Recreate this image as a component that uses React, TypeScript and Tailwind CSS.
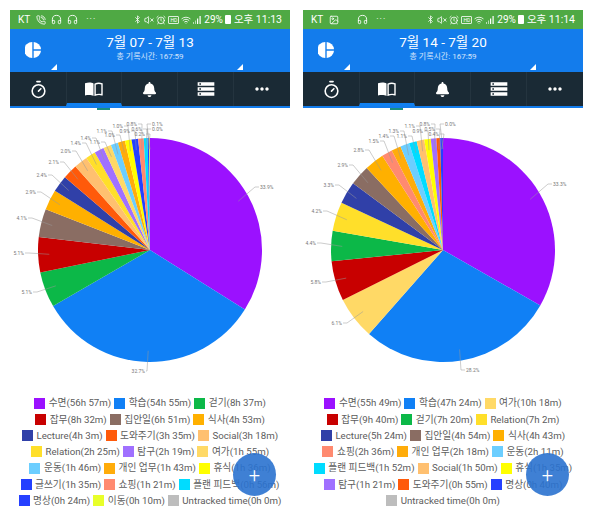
import { AlarmClock, Bluetooth, Headphones, Image, PhoneCall, Timer, VolumeX, Wifi } from "lucide-react";
import { FaBell } from "react-icons/fa";
import { MdMoreHoriz, MdStorage } from "react-icons/md";

const colors: Record<string, { hex: string; bg: string }> = {
    "수면": { hex: "#9b11ff", bg: "bg-[#9b11ff]" },
    "학습": { hex: "#1080f5", bg: "bg-[#1080f5]" },
    "걷기": { hex: "#0cb848", bg: "bg-[#0cb848]" },
    "잡무": { hex: "#c80000", bg: "bg-[#c80000]" },
    "집안일": { hex: "#8a6d63", bg: "bg-[#8a6d63]" },
    "식사": { hex: "#ffb000", bg: "bg-[#ffb000]" },
    "Lecture": { hex: "#3040a8", bg: "bg-[#3040a8]" },
    "도와주기": { hex: "#ff5a0a", bg: "bg-[#ff5a0a]" },
    "Social": { hex: "#ffc070", bg: "bg-[#ffc070]" },
    "Relation": { hex: "#ffdf2a", bg: "bg-[#ffdf2a]" },
    "탐구": { hex: "#a070ff", bg: "bg-[#a070ff]" },
    "여가": { hex: "#ffd966", bg: "bg-[#ffd966]" },
    "운동": { hex: "#6cceff", bg: "bg-[#6cceff]" },
    "개인 업무": { hex: "#ffac0a", bg: "bg-[#ffac0a]" },
    "휴식": { hex: "#ffff00", bg: "bg-[#ffff00]" },
    "글쓰기": { hex: "#2440ff", bg: "bg-[#2440ff]" },
    "쇼핑": { hex: "#ff8a70", bg: "bg-[#ff8a70]" },
    "플랜 피드백": { hex: "#00dcff", bg: "bg-[#00dcff]" },
    "명상": { hex: "#2640ff", bg: "bg-[#2640ff]" },
    "이동": { hex: "#e8ff2a", bg: "bg-[#e8ff2a]" },
    "Untracked time": { hex: "#bdbdbd", bg: "bg-[#bdbdbd]" },
};

// name, minutes, label text, label x, label y (full page coordinates)
type Slice = [string, number, string, number, number];

const week1: Slice[] = [
    ["수면", 3417, "33.9%", 260, 187],
    ["학습", 3295, "32.7%", 145, 371],
    ["걷기", 517, "5.1%", 32, 292],
    ["잡무", 512, "5.1%", 24, 253],
    ["집안일", 411, "4.1%", 27, 218],
    ["식사", 293, "2.9%", 36, 192],
    ["Lecture", 243, "2.4%", 47, 175],
    ["도와주기", 215, "2.1%", 59, 162],
    ["Social", 198, "2.0%", 71, 151],
    ["Relation", 145, "1.4%", 81, 143],
    ["탐구", 139, "1.4%", 91, 138],
    ["여가", 115, "1.1%", 100, 142],
    ["운동", 106, "1.1%", 107, 131],
    ["개인 업무", 103, "1.0%", 115, 135],
    ["휴식", 96, "1.0%", 123, 126],
    ["글쓰기", 95, "0.9%", 130, 131],
    ["쇼핑", 81, "0.8%", 137, 124],
    ["플랜 피드백", 56, "0.6%", 142, 129],
    ["명상", 24, "0.2%", 145, 134],
    ["이동", 10, "0.1%", 152, 124],
    ["Untracked time", 0, "0.0%", 152, 129],
];

const week2: Slice[] = [
    ["수면", 3349, "33.3%", 553, 184],
    ["학습", 2844, "28.2%", 466, 370],
    ["여가", 618, "6.1%", 342, 323],
    ["잡무", 580, "5.8%", 321, 282],
    ["걷기", 440, "4.4%", 316, 243],
    ["Relation", 422, "4.2%", 322, 211],
    ["Lecture", 324, "3.3%", 334, 185],
    ["집안일", 294, "2.9%", 348, 165],
    ["식사", 283, "2.8%", 364, 150],
    ["쇼핑", 156, "1.5%", 379, 141],
    ["개인 업무", 138, "1.4%", 389, 136],
    ["운동", 131, "1.3%", 399, 131],
    ["플랜 피드백", 112, "1.1%", 407, 136],
    ["Social", 110, "1.1%", 415, 126],
    ["휴식", 95, "0.9%", 423, 131],
    ["탐구", 81, "0.8%", 430, 124],
    ["도와주기", 55, "0.5%", 435, 129],
    ["명상", 40, "0.4%", 439, 134],
    ["Untracked time", 0, "0.0%", 445, 124],
];

const point = (cx: number, cy: number, r: number, angle: number) => [
    cx + r * Math.sin(angle),
    cy - r * Math.cos(angle),
];

const duration = (minutes: number) => `${Math.floor(minutes / 60)}h ${minutes % 60}m`;

const PieChart = ({ slices, cx, ox }: { slices: Slice[]; cx: number; ox: number }) => {
    const cy = 250;
    const r = 112;
    const total = slices.reduce((sum, s) => sum + s[1], 0);
    let angle = 0;

    const parts = slices.map((s) => {
        const start = angle;
        angle += (s[1] / total) * Math.PI * 2;
        return { slice: s, start, end: angle, mid: (start + angle) / 2 };
    });

    return (
        <svg width={280} height={285} viewBox={`${ox} 110 280 285`} className="block">
            {parts.map(({ slice, start, end }) => {
                const [x1, y1] = point(cx, cy, r, start);
                const [x2, y2] = point(cx, cy, r, end);
                const large = end - start > Math.PI ? 1 : 0;
                return (
                    <path
                        key={slice[0]}
                        d={`M${cx} ${cy}L${x1} ${y1}A${r} ${r} 0 ${large} 1 ${x2} ${y2}Z`}
                        fill={colors[slice[0]].hex}
                    />
                );
            })}
            {parts.map(({ slice, mid }) => {
                const [px, py] = point(cx, cy, r * 0.9, mid);
                const after = slice[3] > cx;
                const sign = after ? -1 : 1;
                const gap = mid > Math.PI * 0.95 && mid < Math.PI * 1.05 ? 2 : 5;
                return (
                    <g key={slice[0]}>
                        <polyline
                            points={`${px},${py} ${slice[3] + sign * gap},${slice[4]} ${slice[3] + sign},${slice[4]}`}
                            fill="none"
                            stroke="#999999"
                            strokeWidth={0.5}
                        />
                        <text
                            x={slice[3]}
                            y={slice[4] + 1.8}
                            textAnchor={after ? "start" : "end"}
                            fontSize={5}
                            fill="#777777"
                        >
                            {slice[2]}
                        </text>
                    </g>
                );
            })}
        </svg>
    );
};

const Legend = ({ slices }: { slices: Slice[] }) => {
    const rows: Slice[][] = [];
    for (let i = 0; i < slices.length; i += 3) {
        rows.push(slices.slice(i, i + 3));
    }

    return (
        <div className="flex flex-col">
            {rows.map((row) => (
                <div key={row[0][0]} className="flex h-[16.25px] items-center justify-center gap-[3px]">
                    {row.map((s) => (
                        <div key={s[0]} className="flex items-center gap-[3.5px] whitespace-nowrap">
                            <span className={`h-[11px] w-[11px] ${colors[s[0]].bg}`} />
                            <span className="text-[9.7px] leading-none text-[#5c5c5c]">
                                {s[0]}({duration(s[1])})
                            </span>
                        </div>
                    ))}
                </div>
            ))}
        </div>
    );
};

const PieIcon = () => (
    <svg width={16} height={16} viewBox="0 0 16 16" fill="white">
        <path d="M7.3 0a8 8 0 0 0 0 16z" />
        <path d="M8.7 0v7.3H16A8 8 0 0 0 8.7 0z" />
        <path d="M8.7 8.7V16A8 8 0 0 0 16 8.7z" />
    </svg>
);

const BookIcon = () => (
    <svg width={18} height={14} viewBox="0 0 18 14">
        <path d="M0 1.2C3 .2 6.500 .2 8.500 1.500V14C6.500 12.800 3 12.800 0 13.500z" fill="white" />
        <path d="M10.100 2.200C12 1.200 14.800 1.100 17 1.800V12.700C14.800 12.200 12 12.300 10.100 13.200z" fill="none" stroke="white" strokeWidth={1.4} />
    </svg>
);

const SignalIcon = () => (
    <svg width={9} height={9} viewBox="0 0 9 9" fill="white">
        <rect x="0" y="7" width="1" height="2" opacity="0.6" />
        <rect x="2" y="5.500" width="1" height="3.500" opacity="0.6" />
        <rect x="4" y="3.500" width="1.200" height="5.500" />
        <rect x="6.500" y="1" width="1.200" height="8" />
    </svg>
);

const StatusBar = ({ time, second }: { time: string; second: boolean }) => (
    <div className="flex h-[19px] items-center justify-between bg-[#4fa944] pl-[8px] pr-[8px] text-white">
        <div className="flex items-center gap-[5px] text-[10px]">
            <span className="mr-[1px]">KT</span>
            {second ? (
                <>
                    <Image size={10} />
                    <span className="w-[8px]" />
                </>
            ) : (
                <PhoneCall size={10} />
            )}
            {!second && <Headphones size={11} />}
            <Headphones size={11} />
            <span className="ml-[3px] text-[9px] tracking-[1px]">···</span>
        </div>
        <div className="flex items-center gap-[2px] text-[10px]">
            <Bluetooth size={9} />
            <VolumeX size={10} />
            <AlarmClock size={10} />
            <span className="rounded-[1px] border border-white/80 px-[1px] text-[5px] leading-[6px]">HD</span>
            <Wifi size={10} />
            <SignalIcon />
            <span>29%</span>
            <span className="h-[9px] w-[6px] rounded-[1px] bg-white" />
            <span className="ml-[1px] text-[10.500px]">오후 {time}</span>
        </div>
    </div>
);

const Tabs = () => (
    <div className="grid h-[34px] grid-cols-5 bg-[#1a2a35] text-white">
        <div className="flex items-center justify-center">
            <Timer size={19} strokeWidth={2} />
        </div>
        <div className="flex items-center justify-center border-b-[3px] border-l border-r border-b-[#1080f0] border-l-[#24343f] border-r-[#24343f] pt-[3px]">
            <BookIcon />
        </div>
        <div className="flex items-center justify-center border-r border-[#24343f]">
            <FaBell size={15} />
        </div>
        <div className="flex items-center justify-center border-r border-[#24343f]">
            <MdStorage size={20} />
        </div>
        <div className="flex items-center justify-center">
            <MdMoreHoriz size={20} />
        </div>
    </div>
);

const Phone = ({ title, time, slices, cx, ox, second }: {
    title: string;
    time: string;
    slices: Slice[];
    cx: number;
    ox: number;
    second: boolean;
}) => (
    <div className="relative w-[280px] shrink-0">
        <StatusBar time={time} second={second} />
        <div className="relative flex h-[43px] flex-col items-center bg-[#137cec] pt-[4px] text-white">
            <div className="text-[13.500px] leading-[18px]">{title}</div>
            <div className="text-[8px] leading-[12px] text-white/80">총 기록시간: 167:59</div>
            <div className="absolute left-[15px] top-[13px]">
                <PieIcon />
            </div>
            <span className="absolute bottom-[2px] left-[41px] h-0 w-0 border-b-[6px] border-l-[6px] border-b-white border-l-transparent" />
            <span className="absolute bottom-[2px] left-[227px] h-0 w-0 border-b-[6px] border-l-[6px] border-b-white border-l-transparent" />
        </div>
        <Tabs />
        <div className="h-[2px] bg-[#137cec]" />
        <div className="ml-[87px] h-[2px] w-[13px] bg-[#1a9080]" />
        <PieChart slices={slices} cx={cx} ox={ox} />
        <Legend slices={slices} />
        <button className="absolute left-[223px] top-[443px] flex h-[43px] w-[43px] items-center justify-center rounded-full bg-[#2a72cf]/90 text-[20px] font-light leading-none text-white">
            +
        </button>
    </div>
);

export default function App() {
    return (
        <div className="flex min-h-[526px] w-[593px] gap-[13px] overflow-hidden bg-white pl-[10px] pt-[10px] [font-family:Roboto,'Noto_Sans_CJK_KR',sans-serif]">
            <Phone title="7월 07 - 7월 13" time="11:13" slices={week1} cx={150} ox={10} second={false} />
            <Phone title="7월 14 - 7월 20" time="11:14" slices={week2} cx={443} ox={303} second={true} />
        </div>
    );
}
